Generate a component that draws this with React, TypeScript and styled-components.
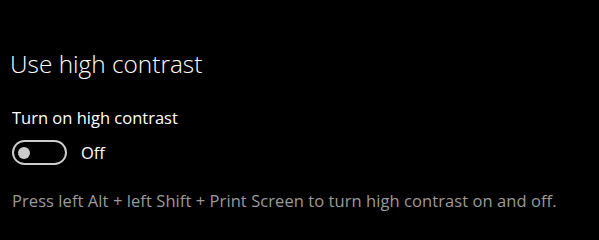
import styled, { createGlobalStyle } from 'styled-components';

const GlobalStyle = createGlobalStyle`
  html, body {
    margin: 0;
    padding: 0;
    background: #000;
    overflow: hidden;
  }
  body {
    font-family: "Open Sans", "Noto Sans", sans-serif;
    color: #fff;
  }
`;

const Page = styled.div`
  width: 599px;
  height: 228px;
  background: #000;
  padding: 48px 0 0 10px;
  box-sizing: border-box;
  display: flex;
  flex-direction: column;
`;

const Title = styled.h2`
  margin: 0;
  font-size: 24.4px;
  font-weight: 300;
  line-height: 32px;
  color: #fff;
`;

const Label = styled.div`
  margin: 27px 0 0 2px;
  font-size: 16.5px;
  line-height: 22px;
  color: #fff;
`;

const ToggleRow = styled.div`
  display: flex;
  align-items: center;
  gap: 14px;
  margin: 11px 0 0 2px;
`;

const Track = styled.button<{ $on: boolean }>`
  width: 55px;
  height: 25px;
  box-sizing: border-box;
  border: 2px solid #cccccc;
  border-radius: 13px;
  background: transparent;
  padding: 0 4px;
  display: flex;
  align-items: center;
  justify-content: ${(p) => (p.$on ? 'flex-end' : 'flex-start')};
`;

const Knob = styled.span`
  width: 12px;
  height: 12px;
  border-radius: 50%;
  background: #cccccc;
`;

const State = styled.span`
  font-size: 16.5px;
  color: #fff;
`;

const Hint = styled.p`
  margin: 25px 0 0 2px;
  font-size: 16.5px;
  letter-spacing: 0.07px;
  line-height: 22px;
  color: #9a9a9a;
`;

export default function App() {
  const on = false;
  return (
    <>
      <GlobalStyle />
      <Page>
        <Title>Use high contrast</Title>
        <Label>Turn on high contrast</Label>
        <ToggleRow>
          <Track $on={on} aria-label="Turn on high contrast">
            <Knob />
          </Track>
          <State>{on ? 'On' : 'Off'}</State>
        </ToggleRow>
        <Hint>Press left Alt + left Shift + Print Screen to turn high contrast on and off.</Hint>
      </Page>
    </>
  );
}
